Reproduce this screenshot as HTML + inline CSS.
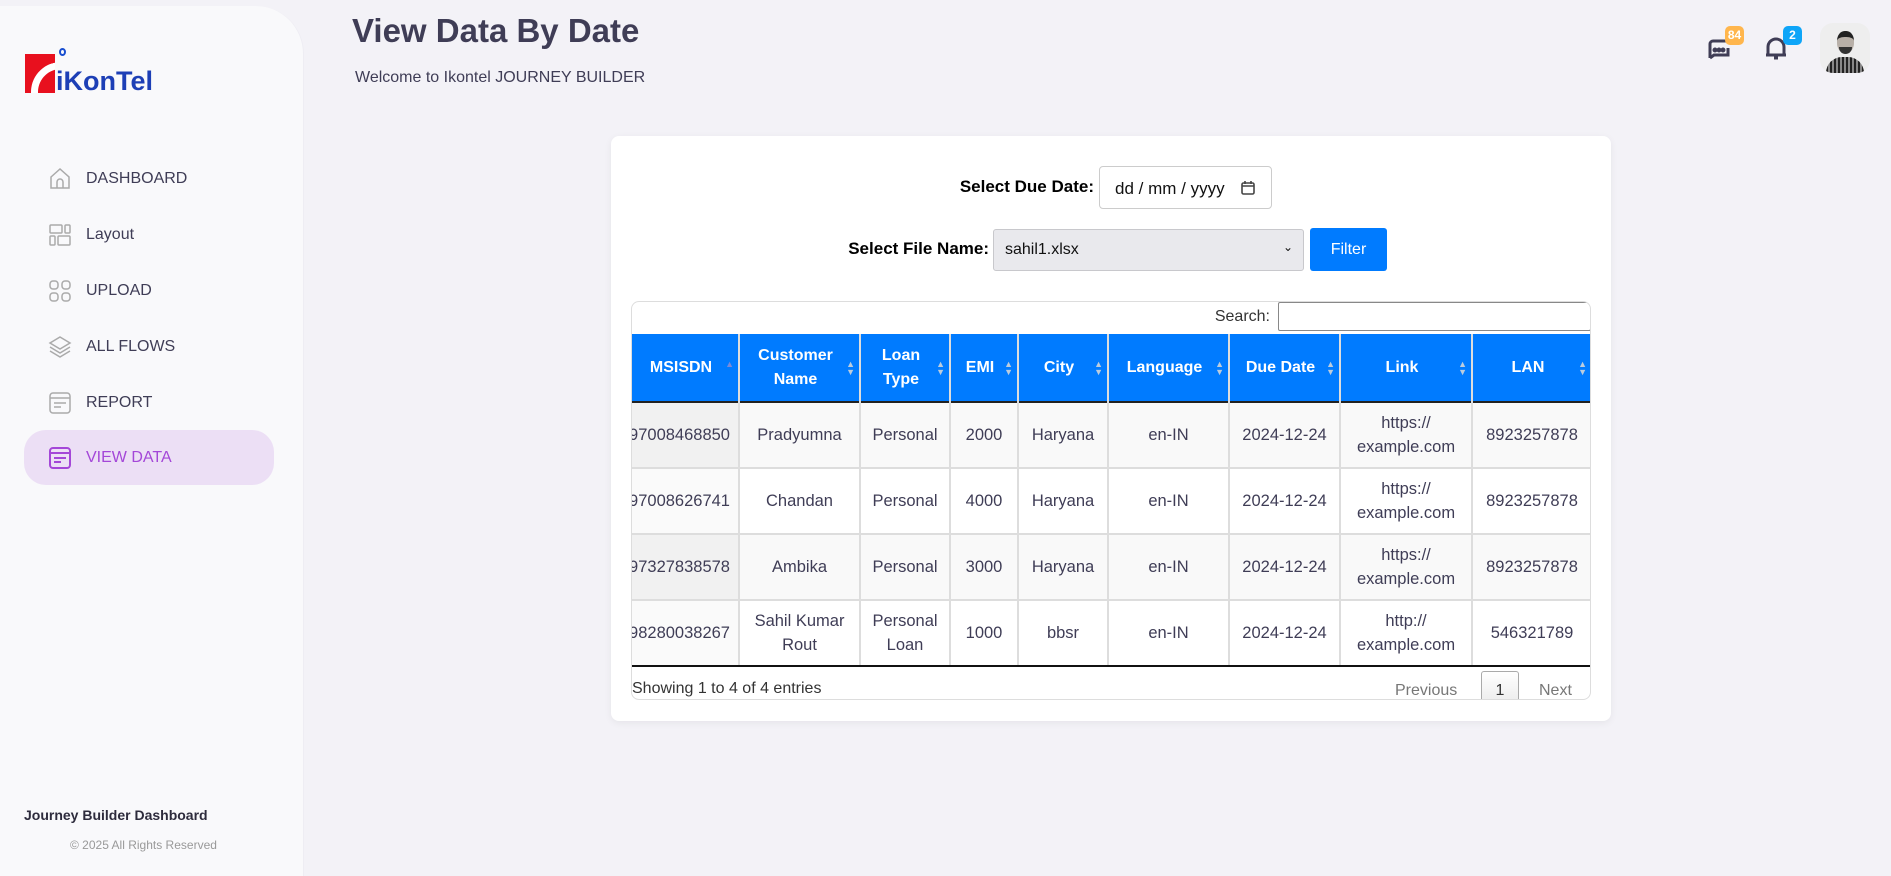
<!DOCTYPE html>
<html><head><meta charset="utf-8"><style>
*{box-sizing:border-box;margin:0;padding:0}
body{width:1891px;height:870px;background:#f3f2f7;font-family:"Liberation Sans",sans-serif;position:relative;overflow:hidden;color:#3f3d56}
.sb{position:absolute;left:0;top:6px;width:304px;height:870px;background:#f9f9fb;border-top-right-radius:48px;border-right:1px solid #eeedf3}
.nav{position:absolute;left:24px;width:250px;height:55px;display:flex;align-items:center;font-size:16px;color:#3f3d56}
.nav svg{position:absolute;left:24px}
.nav span{position:absolute;left:62px}
.act{background:#ecdff5;border-radius:22px;color:#a447d8}
.abs{position:absolute}
.card{position:absolute;left:611px;top:136px;width:1000px;height:585px;background:#fff;border-radius:8px;box-shadow:0 2px 8px rgba(0,0,0,.06)}
.wrap{position:absolute;left:631px;top:301px;width:960px;height:399px;border:1px solid #ddd;border-radius:8px;overflow:hidden;background:#fff}
table{position:absolute;left:0;top:32px;border-collapse:collapse;table-layout:fixed;width:959px}
th{background:#007bff;color:#fff;font-weight:bold;font-size:16px;height:68px;border-left:2px solid #ddd;line-height:24px;position:relative;padding:0 12px 0 4px}
th:first-child{border-left:none}
th .s{position:absolute;right:4px;top:26px;font-size:9px;line-height:8px;color:#bcd}
td{font-size:16.5px;line-height:24px;text-align:center;border-left:2px solid #ddd;border-top:2px solid #ddd;color:#3f3d56;padding:0 2px;white-space:normal}
td:first-child{border-left:none;text-align:right;overflow:hidden;white-space:nowrap;direction:rtl;padding-right:8px}
tr.o td{background:#f9f9f9}
tr.o td:first-child{background:#f1f1f1}
tr.e td:first-child{background:#fafafa}
tbody tr{height:66px}
tbody tr:first-child td{border-top:2px solid #222}
tbody tr:last-child td{border-bottom:2px solid #111}
.badge{position:absolute;width:19px;height:19px;border-radius:5px;color:#fff;font-size:12px;font-weight:bold;text-align:center;line-height:19px}
</style></head><body>
<div class="sb">
 <div class="abs" style="left:25px;top:48px;width:30px;height:39px;background:#e8101e;overflow:hidden">
  <div style="position:absolute;left:6px;top:8px;width:60px;height:60px;border-radius:50%;border:7px solid #fff;border-right-color:transparent;border-bottom-color:transparent;transform:rotate(-15deg)"></div>
 </div>
 <div class="abs" style="left:59px;top:42px;width:7px;height:8px;border:2px solid #1a4fd0;border-radius:50%"></div>
 <div class="abs" style="left:56px;top:60px;font-size:27px;font-weight:bold;color:#1d3fb6;letter-spacing:0">iKonTel</div>

 <div class="nav" style="top:145px"><svg width="24" height="24" viewBox="0 0 24 24" fill="none" stroke="#aaa" stroke-width="1.5"><path d="M3 10l9-8 9 8v11H3z"/><path d="M9 21v-6a3 3 0 016 0v6"/></svg><span>DASHBOARD</span></div>
 <div class="nav" style="top:201px"><svg width="24" height="24" viewBox="0 0 24 24" fill="none" stroke="#aaa" stroke-width="1.5"><rect x="2" y="2" width="12" height="8" rx="1"/><rect x="17" y="2" width="5" height="8" rx="1"/><rect x="2" y="13" width="5" height="9" rx="1"/><rect x="10" y="13" width="12" height="9" rx="1"/></svg><span>Layout</span></div>
 <div class="nav" style="top:257px"><svg width="24" height="24" viewBox="0 0 24 24" fill="none" stroke="#aaa" stroke-width="1.5"><rect x="2" y="2" width="8" height="8" rx="3"/><rect x="14" y="2" width="8" height="8" rx="3"/><rect x="2" y="14" width="8" height="8" rx="3"/><rect x="14" y="14" width="8" height="8" rx="3"/></svg><span>UPLOAD</span></div>
 <div class="nav" style="top:313px"><svg width="24" height="24" viewBox="0 0 24 24" fill="none" stroke="#aaa" stroke-width="1.5"><path d="M12 2l10 6-10 6-10-6z"/><path d="M2 12l10 6 10-6"/><path d="M2 16l10 6 10-6"/></svg><span>ALL FLOWS</span></div>
 <div class="nav" style="top:369px"><svg width="24" height="24" viewBox="0 0 24 24" fill="none" stroke="#aaa" stroke-width="1.5"><rect x="2" y="2" width="20" height="20" rx="3"/><path d="M2 7h20M6 12h12M6 16h7"/></svg><span>REPORT</span></div>
 <div class="nav act" style="top:424px"><svg width="24" height="24" viewBox="0 0 24 24" fill="none" stroke="#a447d8" stroke-width="2"><rect x="2" y="2" width="20" height="20" rx="3"/><path d="M2 7h20M6 12h12M6 16h7"/></svg><span>VIEW DATA</span></div>

 <div class="abs" style="left:24px;top:801px;font-size:14px;font-weight:bold;color:#2d2b3c">Journey Builder Dashboard</div>
 <div class="abs" style="left:70px;top:832px;font-size:12px;color:#999">© 2025 All Rights Reserved</div>
</div>

<div class="abs" style="left:352px;top:12px;font-size:33px;font-weight:bold;color:#3f3d56">View Data By Date</div>
<div class="abs" style="left:355px;top:69px;font-size:16px;color:#3f3d56">Welcome to Ikontel JOURNEY BUILDER</div>

<svg class="abs" style="left:1704px;top:38px" width="28" height="24" viewBox="0 0 28 24" fill="none" stroke="#3f3d56" stroke-width="3"><path d="M6 20V6a3 3 0 013-3h14"/><path d="M6 20l4-3h14v-7"/><circle cx="11" cy="12" r="1" fill="#3f3d56"/><circle cx="15" cy="12" r="1" fill="#3f3d56"/><circle cx="19" cy="12" r="1" fill="#3f3d56"/></svg>
<div class="badge" style="left:1725px;top:26px;background:#ffb64d">84</div>
<svg class="abs" style="left:1764px;top:36px" width="24" height="24" viewBox="0 0 24 24" fill="none" stroke="#3f3d56" stroke-width="3"><path d="M4 19V11a8 8 0 0116 0v8"/><path d="M2 19h20M10 22h4"/></svg>
<div class="badge" style="left:1783px;top:26px;background:#0ea5f8">2</div>
<div class="abs" style="left:1820px;top:23px;width:50px;height:50px;border-radius:13px;background:#eee;overflow:hidden">
 <div style="position:absolute;left:17px;top:8px;width:17px;height:22px;border-radius:45%;background:#b8b0a8;border-top:6px solid #222"></div>
 <div style="position:absolute;left:19px;top:24px;width:13px;height:7px;border-radius:0 0 7px 7px;background:#333"></div>
 <div style="position:absolute;left:6px;top:34px;width:38px;height:20px;border-radius:16px 16px 0 0;background:repeating-linear-gradient(90deg,#222 0 2px,#888 2px 4px)"></div>
</div>

<div class="card"></div>
<div class="abs" style="left:940px;top:177px;width:154px;text-align:right;font-size:17px;font-weight:bold;color:#000">Select Due Date:</div>
<div class="abs" style="left:1099px;top:166px;width:173px;height:43px;border:1px solid #ccc;border-radius:4px;background:#fff;font-size:17px;color:#111;padding:12px 0 0 15px">dd / mm / yyyy
 <svg class="abs" style="left:140px;top:13px" width="16" height="16" viewBox="0 0 16 16" fill="none" stroke="#444" stroke-width="1.6"><rect x="2" y="3" width="12" height="11" rx="1.5"/><path d="M2 6h12M5 1v3M11 1v3"/></svg></div>
<div class="abs" style="left:820px;top:239px;width:169px;text-align:right;font-size:17px;font-weight:bold;color:#000">Select File Name:</div>
<div class="abs" style="left:993px;top:229px;width:311px;height:42px;border:1px solid #c8c8cc;border-radius:3px;background:#e9e9ed;font-size:16px;color:#111;padding:11px 0 0 11px">sahil1.xlsx<span style="position:absolute;right:10px;top:10px;font-size:12px">&#8964;</span></div>
<div class="abs" style="left:1310px;top:228px;width:77px;height:43px;background:#007bff;border-radius:3px;color:#fff;font-size:16px;text-align:center;line-height:43px">Filter</div>

<div class="wrap">
 <div class="abs" style="left:580px;top:6px;width:58px;text-align:right;font-size:16px;color:#333">Search:</div>
 <div class="abs" style="left:646px;top:0;width:313px;height:29px;border:1px solid #888;border-radius:2px"></div>
 <table>
 <colgroup><col style="width:107px"><col style="width:121px"><col style="width:90px"><col style="width:68px"><col style="width:90px"><col style="width:121px"><col style="width:111px"><col style="width:132px"><col style="width:119px"></colgroup>
 <thead><tr><th>MSISDN<span class="s" style="color:#7a8ad8">▲</span></th><th>Customer Name<span class="s">▲<br>▼</span></th><th>Loan Type<span class="s">▲<br>▼</span></th><th>EMI<span class="s">▲<br>▼</span></th><th>City<span class="s">▲<br>▼</span></th><th>Language<span class="s">▲<br>▼</span></th><th>Due Date<span class="s">▲<br>▼</span></th><th>Link<span class="s">▲<br>▼</span></th><th>LAN<span class="s">▲<br>▼</span></th></tr></thead>
 <tbody>
 <tr class="o"><td>97008468850</td><td>Pradyumna</td><td>Personal</td><td>2000</td><td>Haryana</td><td>en-IN</td><td>2024-12-24</td><td>https://<br>example.com</td><td>8923257878</td></tr>
 <tr class="e"><td>97008626741</td><td>Chandan</td><td>Personal</td><td>4000</td><td>Haryana</td><td>en-IN</td><td>2024-12-24</td><td>https://<br>example.com</td><td>8923257878</td></tr>
 <tr class="o"><td>97327838578</td><td>Ambika</td><td>Personal</td><td>3000</td><td>Haryana</td><td>en-IN</td><td>2024-12-24</td><td>https://<br>example.com</td><td>8923257878</td></tr>
 <tr class="e"><td>98280038267</td><td>Sahil Kumar Rout</td><td>Personal Loan</td><td>1000</td><td>bbsr</td><td>en-IN</td><td>2024-12-24</td><td>http://<br>example.com</td><td>546321789</td></tr>
 </tbody></table>
 <div class="abs" style="left:0;top:378px;font-size:16px;color:#333">Showing 1 to 4 of 4 entries</div>
 <div class="abs" style="left:763px;top:380px;font-size:16px;color:#777">Previous</div>
 <div class="abs" style="left:849px;top:369px;width:38px;height:40px;border:1px solid #aaa;border-radius:3px;background:linear-gradient(#fff,#e8e8e8);font-size:16px;text-align:center;padding-top:10px;color:#333">1</div>
 <div class="abs" style="left:907px;top:380px;font-size:16px;color:#777">Next</div>
</div>
</body></html>
